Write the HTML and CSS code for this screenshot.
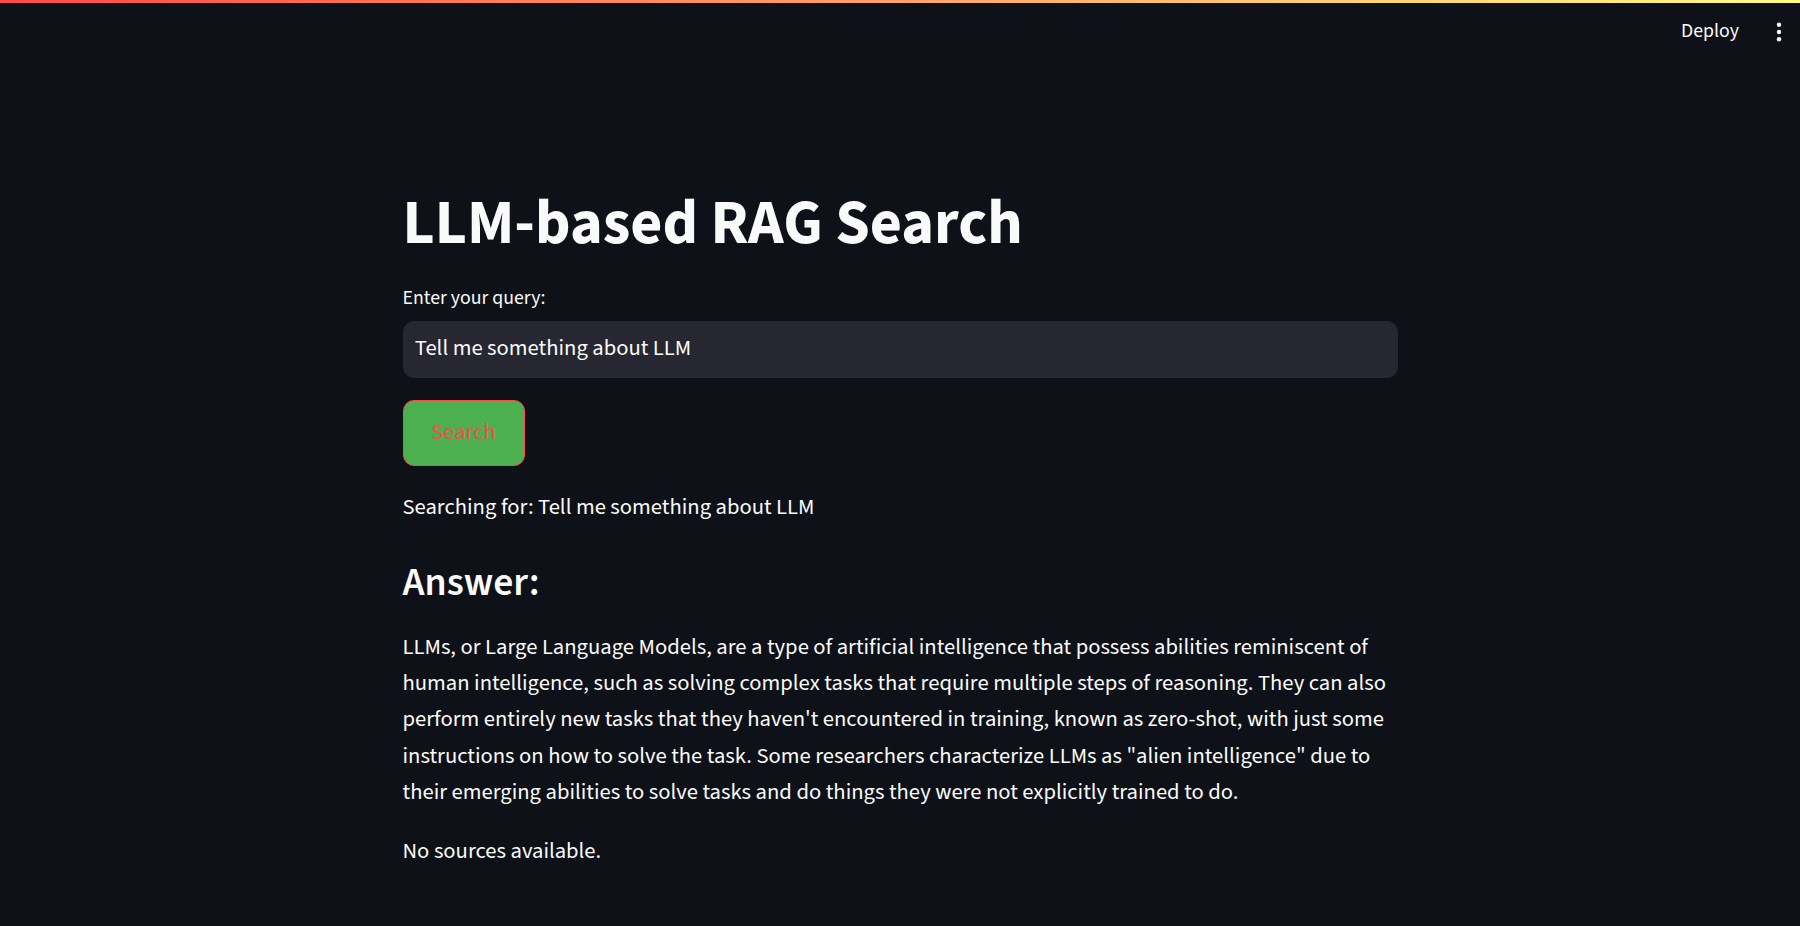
FILE: index.html
```html
<!DOCTYPE html>
<html lang="en">
<head>
<meta charset="utf-8">
<title>LLM-based RAG Search</title>
<link rel="stylesheet" href="styles.css">
</head>
<body>
<div class="decoration"></div>
<header class="toolbar">
  <span class="deploy">Deploy</span>
  <svg class="menu-icon" viewBox="0 0 24 24" aria-hidden="true">
    <circle cx="12" cy="5.8" r="1.9"/>
    <circle cx="12" cy="12" r="1.9"/>
    <circle cx="12" cy="18.2" r="1.9"/>
  </svg>
</header>
<main class="block">
  <h1 class="title">LLM-based RAG Search</h1>
  <div class="text-input">
    <label class="input-label" for="q">Enter your query:</label>
    <div class="input-box"><input id="q" class="input" type="text" value="Tell me something about LLM"></div>
  </div>
  <button class="search-btn" type="button">Search</button>
  <p class="text">Searching for: Tell me something about LLM</p>
  <div class="answer">
    <h3 class="answer-title">Answer:</h3>
    <p class="text">LLMs, or Large Language Models, are a type of artificial intelligence that possess abilities reminiscent of human intelligence, such as solving complex tasks that require multiple steps of reasoning. They can also perform entirely new tasks that they haven't encountered in training, known as zero-shot, with just some instructions on how to solve the task. Some researchers characterize LLMs as "alien intelligence" due to their emerging abilities to solve tasks and do things they were not explicitly trained to do.</p>
  </div>
  <p class="text">No sources available.</p>
</main>
</body>
</html>
```
FILE: styles.css
```css
* { box-sizing: border-box; }
html, body {
  margin: 0;
  padding: 0;
  background: #0e1117;
  color: #fafafa;
  font-family: "Source Sans 3", "Source Sans Pro", Lato, "Liberation Sans", sans-serif;
  height: 100%;
  overflow: hidden;
}
.decoration {
  height: 3px;
  background: linear-gradient(90deg, rgb(255, 75, 75), rgb(255, 253, 128));
}
.toolbar {
  height: 58px;
  display: flex;
  align-items: center;
  justify-content: flex-end;
  gap: 26px;
  padding-right: 7px;
}
.deploy {
  font-size: 19.8px;
  line-height: 31.7px;
  color: #fafafa;
}
.menu-icon {
  width: 28px;
  height: 28px;
  fill: #fafafa;
}
.block {
  width: 995px;
  margin: 0 auto;
  padding-top: 125.5px;
  display: flex;
  flex-direction: column;
  align-items: flex-start;
}
.title {
  margin: 0 0 22px;
  padding: 0;
  font-size: 62.2px;
  line-height: 74.4px;
  font-weight: 700;
  color: #fafafa;
}
.text-input {
  width: 100%;
  display: flex;
  flex-direction: column;
}
.input-label {
  font-size: 19.8px;
  line-height: 31.7px;
  min-height: 32.4px;
  margin-bottom: 5.7px;
  color: #fafafa;
}
.input-box {
  height: 56.6px;
  border: 1px solid #262730;
  border-radius: 11px;
  background: #262730;
  display: flex;
  align-items: center;
}
.input {
  width: 100%;
  border: 0;
  outline: none;
  background: transparent;
  color: #fafafa;
  font-family: inherit;
  font-size: 22.6px;
  line-height: 31.7px;
  padding: 0 11.3px;
}
.search-btn {
  margin-top: 22.6px;
  height: 66px;
  width: 122px;
  padding: 0;
  border: 1px solid #ff4b4b;
  border-radius: 11px;
  background: #4caf50;
  color: #ff4b4b;
  font-family: inherit;
  font-size: 22.6px;
  line-height: 31.7px;
}
.text {
  margin: 22.6px 0 0;
  font-size: 22.6px;
  line-height: 36.2px;
  color: #fafafa;
}
.answer {
  margin-top: 22.6px;
  width: 100%;
}
.answer-title {
  margin: 0;
  padding-top: 11.3px;
  font-size: 39.6px;
  line-height: 47.5px;
  font-weight: 600;
}
.answer .text {
  margin-top: 22.6px;
}
```
